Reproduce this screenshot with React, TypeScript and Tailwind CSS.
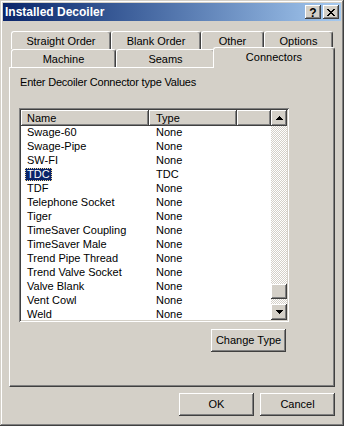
import React from 'react';

const raised =
  'bg-[#d4d0c8] shadow-[inset_-1px_-1px_#404040,inset_1px_1px_#ffffff,inset_-2px_-2px_#808080,inset_2px_2px_#d4d0c8]';

const rows: { name: string; type: string }[] = [
  { name: 'Swage-60', type: 'None' },
  { name: 'Swage-Pipe', type: 'None' },
  { name: 'SW-FI', type: 'None' },
  { name: 'TDC', type: 'TDC' },
  { name: 'TDF', type: 'None' },
  { name: 'Telephone Socket', type: 'None' },
  { name: 'Tiger', type: 'None' },
  { name: 'TimeSaver Coupling', type: 'None' },
  { name: 'TimeSaver Male', type: 'None' },
  { name: 'Trend Pipe Thread', type: 'None' },
  { name: 'Trend Valve Socket', type: 'None' },
  { name: 'Valve Blank', type: 'None' },
  { name: 'Vent Cowl', type: 'None' },
  { name: 'Weld', type: 'None' },
];

const Tab = ({ label, w }: { label: string; w: string }) => (
  <div
    className={`${w} h-[18px] flex items-center justify-center pt-px bg-[#d4d0c8] border-t border-l border-white border-r border-r-[#404040] rounded-t-[3px] shadow-[inset_-1px_0_#808080]`}
  >
    {label}
  </div>
);

const Arrow = ({ down }: { down?: boolean }) => (
  <svg width="7" height="4" viewBox="0 0 7 4" shapeRendering="crispEdges">
    {down ? (
      <path d="M0 0h7v1H0zM1 1h5v1H1zM2 2h3v1H2zM3 3h1v1H3z" fill="#000" />
    ) : (
      <path d="M3 0h1v1H3zM2 1h3v1H2zM1 2h5v1H1zM0 3h7v1H0z" fill="#000" />
    )}
  </svg>
);

const Button = ({ label, className = '' }: { label: string; className?: string }) => (
  <div className={`${raised} w-[75px] h-[23px] flex items-center justify-center pb-px ${className}`}>
    {label}
  </div>
);

export default function App() {
  return (
    <div className="w-[344px] h-[426px] bg-[#d4d0c8] p-[3px] flex flex-col text-[11px] leading-[13px] text-black font-['Liberation_Sans',Arial,sans-serif] shadow-[inset_-1px_-1px_#404040,inset_1px_1px_#d4d0c8,inset_-2px_-2px_#808080,inset_2px_2px_#ffffff]">
      {/* title bar */}
      <div className="h-[18px] flex items-center justify-between pl-[2px] pr-[2px] bg-linear-to-r from-[#0a246a] to-[#a6caf0]">
        <span className="text-white font-bold text-[12px] leading-[14px]">Installed Decoiler</span>
        <div className="flex gap-[2px]">
          <div className={`${raised} w-[16px] h-[14px] flex items-center justify-center font-bold text-[12px] leading-[12px] pt-px`}>
            ?
          </div>
          <div className={`${raised} w-[16px] h-[14px] flex items-center justify-center`}>
            <svg width="8" height="7" viewBox="0 0 8 7" shapeRendering="crispEdges">
              <path
                d="M0 0h2v1H0zM6 0h2v1H6zM1 1h2v1H1zM5 1h2v1H5zM2 2h4v1H2zM3 3h2v1H3zM2 4h4v1H2zM1 5h2v1H1zM5 5h2v1H5zM0 6h2v1H0zM6 6h2v1H6z"
                fill="#000"
              />
            </svg>
          </div>
        </div>
      </div>

      {/* tabs */}
      <div className="mt-[10px] ml-[8px] w-[322px]">
        <div className="flex">
          <Tab label="Straight Order" w="w-[100px]" />
          <Tab label="Blank Order" w="w-[90px]" />
          <Tab label="Other" w="w-[63px]" />
          <Tab label="Options" w="w-[69px]" />
        </div>
        <div className="flex h-[18px] items-end">
          <Tab label="Machine" w="w-[105px]" />
          <Tab label="Seams" w="w-[99px]" />
          <div className="relative z-10 w-[122px] h-[21px] -mx-[2px] -mb-px flex justify-center pt-[3px] bg-[#d4d0c8] border-t border-l border-white border-r border-r-[#404040] rounded-t-[3px] shadow-[inset_-1px_0_#808080]">
            Connectors
          </div>
        </div>
      </div>

      {/* panel */}
      <div className="ml-[6px] w-[326px] h-[320px] flex flex-col bg-[#d4d0c8] border border-white border-r-[#404040] border-b-[#404040] shadow-[inset_-1px_-1px_#808080]">
        <div className="mt-[8px] ml-[10px] h-[13px] tracking-[-0.2px]">Enter Decoiler Connector type Values</div>

        <div className="mt-[19px] ml-[9px] w-[270px] h-[214px] p-[2px] bg-white shadow-[inset_1px_1px_#808080,inset_-1px_-1px_#ffffff,inset_2px_2px_#404040,inset_-2px_-2px_#d4d0c8]">
          <div className="flex h-full">
            <div className="w-[250px] flex flex-col">
              <div className="flex h-[16px] shrink-0">
                <div className={`${raised} w-[128px] pl-[6px] leading-[16px]`}>Name</div>
                <div className={`${raised} w-[88px] pl-[7px] leading-[16px]`}>Type</div>
                <div className={`${raised} flex-1`} />
              </div>
              <div className="flex-1 overflow-hidden">
                {rows.map((r) => (
                  <div key={r.name} className="flex h-[14px] leading-[13px]">
                    <div className="w-[128px] pl-[4px]">
                      {r.name === 'TDC' ? (
                        <span className="inline-block h-[13px] px-[2px] bg-[#0a246a] text-white outline outline-1 outline-dotted outline-[#f5db95] -outline-offset-1">
                          {r.name}
                        </span>
                      ) : (
                        <span className="inline-block px-[2px]">{r.name}</span>
                      )}
                    </div>
                    <div className="w-[88px] pl-[7px]">{r.type}</div>
                  </div>
                ))}
              </div>
            </div>

            {/* scrollbar */}
            <div className="w-[16px] flex flex-col">
              <div className={`${raised} h-[16px] flex items-center justify-center`}>
                <Arrow />
              </div>
              <div className="flex-1 bg-[conic-gradient(#ffffff_25%,#d4d0c8_0_50%,#ffffff_0_75%,#d4d0c8_0)] bg-[length:2px_2px]" />
              <div className={`${raised} h-[15px]`} />
              <div className="h-[5px] bg-[conic-gradient(#ffffff_25%,#d4d0c8_0_50%,#ffffff_0_75%,#d4d0c8_0)] bg-[length:2px_2px]" />
              <div className={`${raised} h-[16px] flex items-center justify-center`}>
                <Arrow down />
              </div>
            </div>
          </div>
        </div>

        <Button label="Change Type" className="mt-[7px] ml-[201px]" />
      </div>

      {/* dialog buttons */}
      <div className="mt-[6px] flex justify-end gap-[6px] pr-[6px]">
        <Button label="OK" />
        <Button label="Cancel" />
      </div>
    </div>
  );
}
